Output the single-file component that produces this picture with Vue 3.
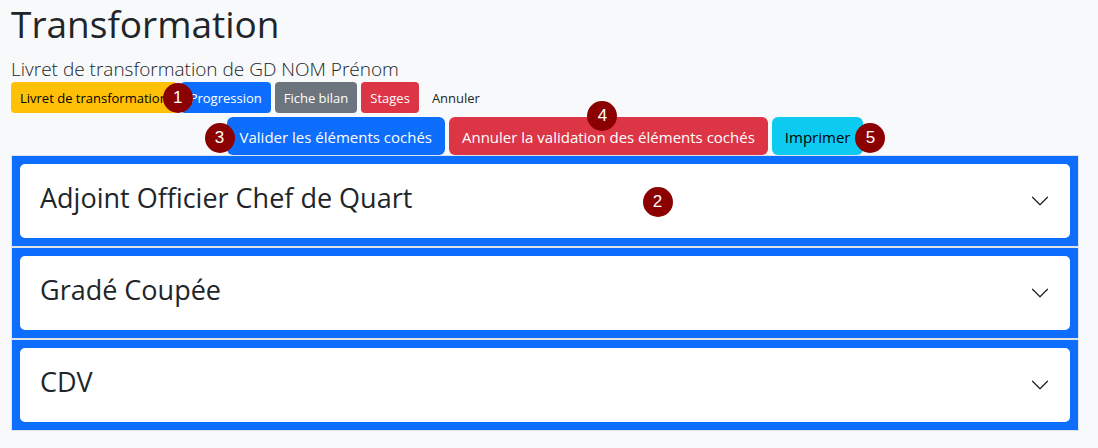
<script setup>
import { ref } from 'vue'

const tabs = [
  { label: 'Livret de transformation', tone: 'warning', mark: 1 },
  { label: 'Progression', tone: 'primary' },
  { label: 'Fiche bilan', tone: 'secondary' },
  { label: 'Stages', tone: 'danger' },
  { label: 'Annuler', tone: 'plain' },
]

const actions = [
  { label: 'Valider les éléments cochés', tone: 'primary', mark: 3, place: 'start' },
  { label: 'Annuler la validation des éléments cochés', tone: 'danger', mark: 4, place: 'top' },
  { label: 'Imprimer', tone: 'info', mark: 5, place: 'end' },
]

const sections = [
  { title: 'Adjoint Officier Chef de Quart', mark: 2 },
  { title: 'Gradé Coupée' },
  { title: 'CDV' },
]

const selected = ref(null)
</script>

<template>
  <main class="page">
    <h1>Transformation</h1>
    <p class="lead">Livret de transformation de GD NOM Prénom</p>

    <nav class="tabs">
      <div v-for="tab in tabs" :key="tab.label" class="slot">
        <a href="#" class="btn small" :class="tab.tone">{{ tab.label }}</a>
        <span v-if="tab.mark" class="mark corner">{{ tab.mark }}</span>
      </div>
    </nav>

    <div class="actions">
      <div v-for="action in actions" :key="action.label" class="slot">
        <button type="button" class="btn" :class="action.tone">{{ action.label }}</button>
        <span class="mark" :class="action.place">{{ action.mark }}</span>
      </div>
    </div>

    <div class="sections">
      <section v-for="(section, i) in sections" :key="section.title" class="card">
        <h2>
          <button type="button" class="toggle" :aria-pressed="selected === i" @click="selected = selected === i ? null : i">
            <span>{{ section.title }}</span>
            <svg class="chevron" viewBox="0 0 16 16" aria-hidden="true">
              <path d="M2 5l6 6 6-6" />
            </svg>
          </button>
        </h2>
        <span v-if="section.mark" class="mark inside">{{ section.mark }}</span>
      </section>
    </div>
  </main>
</template>

<style>
body {
  background: #f8f9fa;
}
</style>

<style scoped>
.page {
  padding: 0 19px 18px 11px;
  color: #212529;
  font-family: "Segoe UI", "Open Sans", "Noto Sans", sans-serif;
  font-size: 15px;
  line-height: 24px;
}

h1 {
  margin: 0;
  padding-bottom: 8px;
  font-size: 37px;
  font-weight: 400;
  line-height: 48px;
}

.lead {
  margin: 0;
  font-size: 19px;
  font-weight: 300;
  line-height: 26px;
}

.tabs {
  display: flex;
  gap: 4px;
}

.actions {
  display: flex;
  justify-content: center;
  gap: 4px;
  padding-top: 4px;
}

.slot {
  position: relative;
}

.btn {
  display: block;
  box-sizing: border-box;
  padding: 8px 13px 6px;
  border: 0;
  border-radius: 6px;
  font-family: inherit;
  font-size: 15px;
  line-height: 24px;
  text-decoration: none;
  white-space: nowrap;
  cursor: pointer;
}

.small {
  padding: 6px 9px 4px;
  border-radius: 4px;
  font-size: 13px;
  line-height: 21px;
}

.warning {
  background: #ffc107;
  color: #000;
}

.primary {
  background: #0d6efd;
  color: #fff;
}

.secondary {
  background: #6c757d;
  color: #fff;
}

.danger {
  background: #dc3545;
  color: #fff;
}

.info {
  background: #0dcaf0;
  color: #000;
}

.plain {
  color: #212529;
}

.sections {
  display: grid;
  gap: 2px;
  padding: 1px;
  background: #dfe2e6;
}

.card {
  position: relative;
  padding: 8px;
  background: #0d6efd;
}

h2 {
  margin: 0;
  font-weight: 400;
}

.toggle {
  display: flex;
  align-items: center;
  justify-content: space-between;
  width: 100%;
  padding: 16px 20px;
  border: 0;
  border-radius: 5px;
  background: #fff;
  color: #212529;
  font-family: inherit;
  font-size: 27px;
  line-height: 36px;
  text-align: left;
  cursor: pointer;
}

.toggle span {
  padding-bottom: 6px;
}

.chevron {
  width: 20px;
  height: 20px;
  fill: none;
  stroke: #212529;
  stroke-linecap: round;
  stroke-linejoin: round;
}

.mark {
  position: absolute;
  z-index: 1;
  width: 30px;
  height: 30px;
  border-radius: 50%;
  background: #8b0000;
  color: #fff;
  font-family: "Liberation Sans", Arial, sans-serif;
  font-size: 17px;
  line-height: 30px;
  text-align: center;
}

.corner {
  top: 1px;
  right: -16px;
}

.start {
  top: 6px;
  left: -22px;
}

.top {
  top: -16px;
  left: calc(50% - 21px);
}

.end {
  top: 6px;
  right: -22px;
}

.inside {
  top: 31px;
  left: calc(60% - 9px);
}
</style>
